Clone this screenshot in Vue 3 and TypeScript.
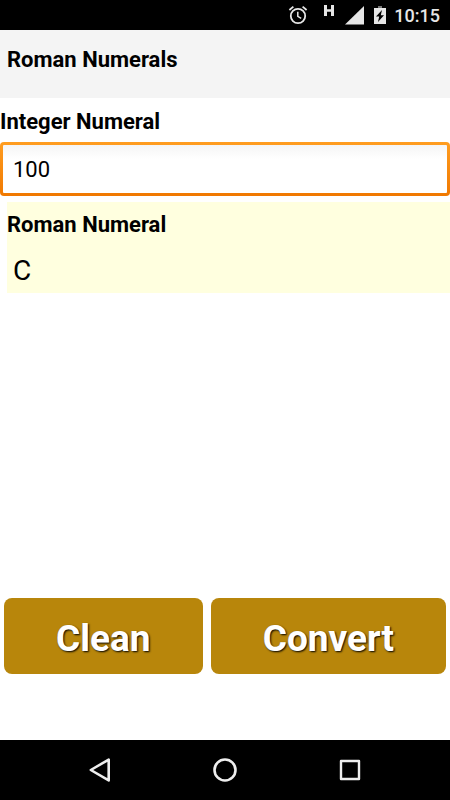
<script setup lang="ts">
import { ref } from 'vue'

const integer = ref('100')
const roman = ref('C')

const numerals: [number, string][] = [
  [1000, 'M'], [900, 'CM'], [500, 'D'], [400, 'CD'],
  [100, 'C'], [90, 'XC'], [50, 'L'], [40, 'XL'],
  [10, 'X'], [9, 'IX'], [5, 'V'], [4, 'IV'], [1, 'I'],
]

function convert(): void {
  let rest = Number.parseInt(integer.value, 10)
  let result = ''
  if (rest > 0 && rest < 4000) {
    for (const [value, symbol] of numerals) {
      while (rest >= value) {
        result += symbol
        rest -= value
      }
    }
  }
  roman.value = result
}

function clean(): void {
  integer.value = ''
  roman.value = ''
}
</script>

<template>
  <div class="screen">
    <div class="status">
      <svg width="20" height="20" viewBox="0 0 20 20" fill="none" stroke="#e6e6e6">
        <circle cx="10" cy="11" r="7.2" stroke-width="1.8" />
        <path d="M9.8 6.8v4.6l3.4 2" stroke-width="1.5" />
        <path d="M1.4 5l4-3.4M18.6 5l-4-3.4" stroke-width="1.8" />
      </svg>
      <svg class="network" width="11" height="20" viewBox="0 0 11 20" fill="#e6e6e6">
        <path d="M0 0h3v4.3h4V0h3v11H7V6.700H3V11H0z" />
      </svg>
      <svg class="signal" width="19" height="20" viewBox="0 0 19 20" fill="#e6e6e6">
        <path d="M19 1v18.500H0z" />
      </svg>
      <svg class="battery" width="12" height="20" viewBox="0 0 12 20">
        <path d="M4 1h4v2H4z" fill="#777" />
        <path d="M0 3h12v16H0z" fill="#e6e6e6" />
        <path d="M8 5L2 11.500h3.200L4 17l6-6.800H6.800z" fill="#000" />
      </svg>
      <span class="time">10:15</span>
    </div>

    <header class="header">
      <h1>Roman Numerals</h1>
    </header>

    <main class="content">
      <label class="caption" for="integer">Integer Numeral</label>
      <input id="integer" v-model="integer" class="field" type="text" inputmode="numeric" />
      <section class="result">
        <h2>Roman Numeral</h2>
        <output for="integer">{{ roman }}</output>
      </section>
      <div class="actions">
        <button type="button" @click="clean">Clean</button>
        <button type="button" @click="convert">Convert</button>
      </div>
    </main>

    <nav class="navbar">
      <button type="button" aria-label="Back">
        <svg width="24" height="26" viewBox="0 0 24 26" fill="none" stroke="#eee" stroke-width="2.6" stroke-linejoin="round">
          <path d="M20.700 2.600v20.800L2.800 13z" />
        </svg>
      </button>
      <button type="button" aria-label="Home">
        <svg width="24" height="26" viewBox="0 0 24 26" fill="none" stroke="#eee" stroke-width="2.6">
          <circle cx="12" cy="13" r="10.5" />
        </svg>
      </button>
      <button type="button" aria-label="Recent apps">
        <svg width="24" height="26" viewBox="0 0 24 26" fill="none" stroke="#eee" stroke-width="2.4" stroke-linejoin="round">
          <rect x="3" y="4" width="18" height="18" />
        </svg>
      </button>
    </nav>
  </div>
</template>

<style>
body {
  background: #fff;
}
</style>

<style scoped>
.screen {
  display: flex;
  flex-direction: column;
  min-height: 100vh;
  color: #000;
  font-family: Roboto, sans-serif;
}

.status {
  display: flex;
  align-items: center;
  justify-content: flex-end;
  height: 30px;
  padding-right: 10px;
  background: #000;
}

.network {
  margin-left: 16px;
}

.signal {
  margin-left: 10px;
}

.battery {
  margin-left: 10px;
}

.time {
  margin-left: 8px;
  color: #e6e6e6;
  font-size: 18px;
  font-weight: 500;
  line-height: 30px;
  padding-top: 2px;
}

.header {
  height: 68px;
  box-sizing: border-box;
  padding: 17px 7px;
  background: #f4f4f4;
}

h1,
h2,
.caption {
  display: block;
  margin: 0;
  font-size: 22px;
  font-weight: 700;
  line-height: 26px;
}

.content {
  display: flex;
  flex: 1;
  flex-direction: column;
  padding-top: 11px;
}

.field {
  width: 100%;
  height: 54px;
  box-sizing: border-box;
  margin: 7px 0 6px;
  padding: 0 10px;
  border: 3px solid transparent;
  border-radius: 4px;
  outline: none;
  background:
    linear-gradient(#f5f5f5, #fff 14px) padding-box,
    linear-gradient(#ff9d20, #f07800) border-box;
  color: #000;
  font-family: inherit;
  font-size: 22px;
}

.result {
  display: flex;
  flex-direction: column;
  margin-left: 7px;
  padding: 10px 0 5px;
  background: #ffffdf;
}

.result output {
  min-height: 34px;
  padding: 16px 6px 0;
  font-size: 28px;
  line-height: 34px;
}

.actions {
  display: flex;
  gap: 8px;
  margin-top: auto;
  padding: 0 4px 66px;
}

.actions button {
  flex: 1 1 auto;
  height: 76px;
  padding: 4px 0 0;
  border: 0;
  border-radius: 8px;
  background: #b8860b;
  color: #fff;
  font-family: inherit;
  font-size: 37px;
  font-weight: 700;
  text-shadow: 1px 1px 2px #000;
}

.navbar {
  display: flex;
  align-items: center;
  justify-content: center;
  gap: 101px;
  height: 60px;
  background: #000;
}

.navbar button {
  display: flex;
  padding: 0;
  border: 0;
  background: none;
}
</style>
